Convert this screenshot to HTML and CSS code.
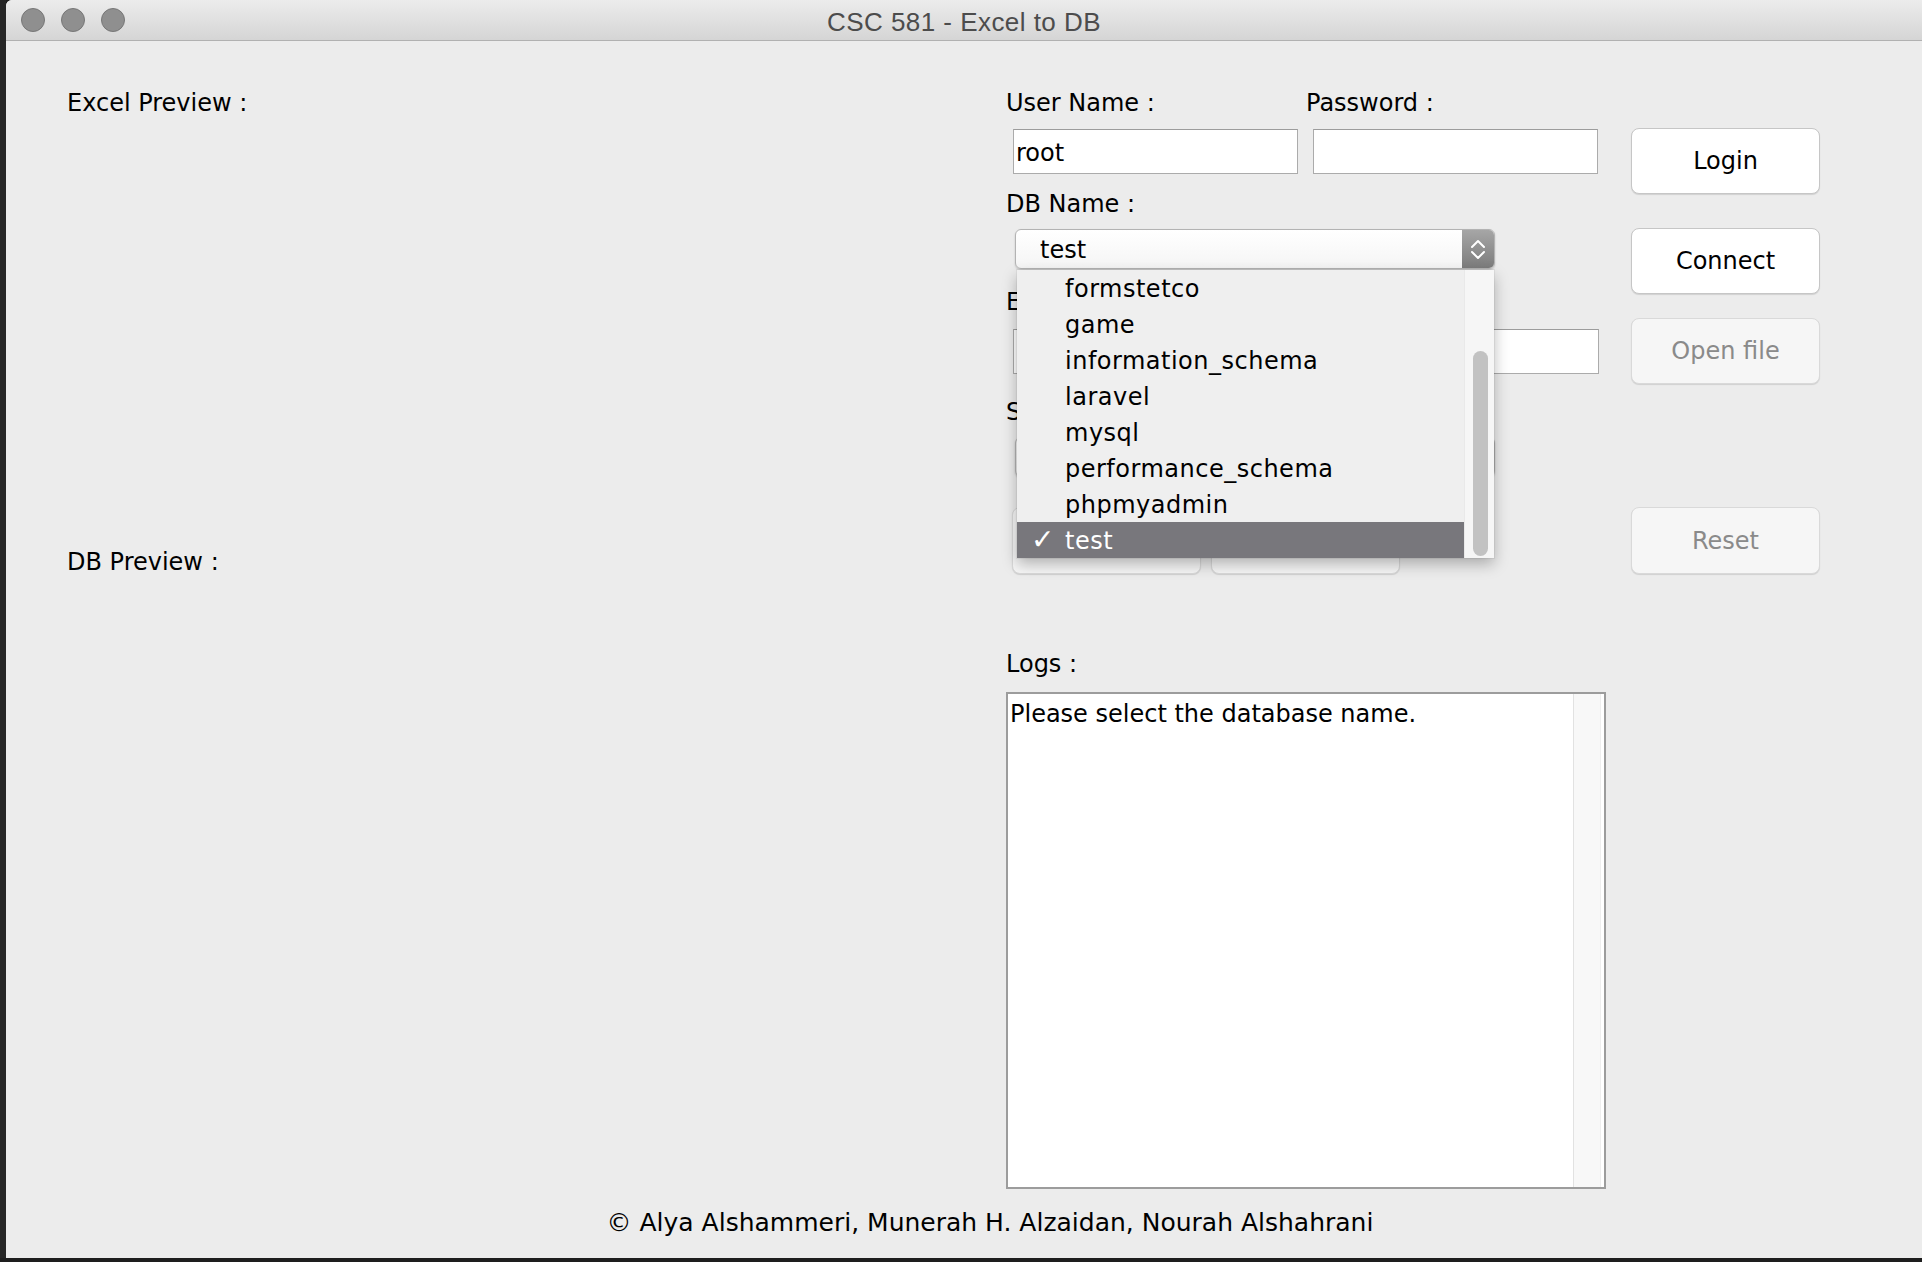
FILE: index.html
```html
<!DOCTYPE html>
<html lang="en">
<head>
<meta charset="utf-8">
<title>CSC 581 - Excel to DB</title>
<link rel="stylesheet" href="styles.css">
</head>
<body>
<div class="desktop">
  <div class="desk-edge"></div>
  <div class="window">
    <header class="titlebar">
      <div class="lights"><span class="light"></span><span class="light"></span><span class="light"></span></div>
      <div class="title">CSC 581 - Excel to DB</div>
      <div></div>
    </header>
    <main class="content">
      <div class="panes">
        <section class="previews">
          <div class="label">Excel Preview :</div>
          <div class="preview-area"></div>
          <div class="label">DB Preview :</div>
        </section>

        <section class="form">
          <div class="pair">
            <div class="label">User Name :</div>
            <div class="label">Password :</div>
          </div>
          <div class="pair pair-fields">
            <div class="cell"><div class="field">root</div></div>
            <div class="cell"><div class="field"></div></div>
          </div>

          <div class="label gap-db">DB Name :</div>
          <div class="combo gap-combo">
            <div class="combo-value">test</div>
            <div class="combo-arrows">
              <svg width="32" height="38" viewBox="0 0 32 38"><path d="M10 17 L16 11 L22 17 M10 22 L16 28 L22 22" fill="none" stroke="#fff" stroke-width="2" stroke-linecap="round" stroke-linejoin="round"/></svg>
            </div>
            <div class="popup">
              <ul class="options">
                <li class="option">formstetco</li>
                <li class="option">game</li>
                <li class="option">information_schema</li>
                <li class="option">laravel</li>
                <li class="option">mysql</li>
                <li class="option">performance_schema</li>
                <li class="option">phpmyadmin</li>
                <li class="option selected"><span class="check">✓</span>test</li>
              </ul>
              <div class="popup-track"><div class="popup-thumb"></div></div>
            </div>
          </div>

          <div class="label gap-file">Excel File :</div>
          <div class="field wide gap-filefield"></div>

          <div class="label gap-sheet">Sheet :</div>
          <div class="combo gap-combo"><div class="combo-value"></div><div class="combo-arrows"></div></div>

          <div class="btn-row">
            <button class="btn btn-tall disabled" aria-hidden="true"></button>
            <button class="btn btn-tall disabled" aria-hidden="true"></button>
          </div>

          <div class="label gap-logs">Logs :</div>
          <div class="log">
            <div class="log-text">Please select the database name.</div>
            <div class="log-track"></div>
          </div>
        </section>

        <section class="actions">
          <button class="btn gap-login">Login</button>
          <button class="btn gap-connect">Connect</button>
          <button class="btn disabled gap-open">Open file</button>
          <button class="btn btn-tall disabled gap-reset">Reset</button>
        </section>
      </div>
      <footer class="credits">© Alya Alshammeri, Munerah H. Alzaidan, Nourah Alshahrani</footer>
    </main>
  </div>
</div>
<div class="desk-bottom"></div>
</body>
</html>
```

FILE: styles.css
```css
* { box-sizing: border-box; }
html, body { margin: 0; padding: 0; }
body {
  width: 1922px;
  height: 1262px;
  overflow: hidden;
  background: #1f1f1f;
  font-family: "DejaVu Sans", sans-serif;
  font-size: 24px;
  color: #000;
}
.desktop { display: flex; height: 1258px; }
.desk-edge { width: 6px; background: #262626; }
.desk-bottom { height: 4px; background: #1e1e1e; }
.window {
  width: 1916px;
  display: flex;
  flex-direction: column;
  background: #ececec;
  border-top-left-radius: 6px;
  overflow: hidden;
}

/* title bar */
.titlebar {
  height: 41px;
  display: grid;
  grid-template-columns: 1fr auto 1fr;
  align-items: center;
  background: linear-gradient(#ececec, #d5d5d5);
  border-bottom: 1px solid #b1b1b1;
}
.lights { display: flex; gap: 16px; padding-left: 15px; }
.light {
  width: 24px; height: 24px; border-radius: 50%;
  background: #8f8f8f; border: 1px solid #777;
}
.title {
  font-family: "Liberation Sans", Arial, sans-serif;
  font-size: 26px;
  letter-spacing: 0.45px;
  color: #4c4c4c;
  padding-top: 4px;
}

/* content */
.content { flex: 1; display: flex; flex-direction: column; padding-top: 50px; }
.panes { display: flex; padding-left: 61px; }
.label { height: 24px; line-height: 24px; white-space: nowrap; }
.previews { width: 939px; display: flex; flex-direction: column; }
.preview-area { height: 435px; }

.form { width: 600px; display: flex; flex-direction: column; }
.pair { display: flex; }
.pair > * { width: 300px; }
.pair-fields { margin-top: 14px; }
.field {
  height: 45px; width: 285px; margin-left: 7px;
  border: 1px solid #ababab; border-top-color: #9c9c9c;
  background: #fff;
  padding: 3px 0 0 2px;
  line-height: 41px;
}
.field.wide { width: 586px; }

.gap-db { margin-top: 18px; }
.gap-combo { margin-top: 13px; }
.gap-file { margin-top: 21px; }
.gap-filefield { margin-top: 15px; }
.gap-sheet { margin-top: 26px; }
.gap-logs { margin-top: 78px; }

.combo {
  position: relative;
  margin-left: 9px;
  width: 480px;
  height: 40px;
  display: flex;
  border: 1px solid #b3b3b3;
  border-radius: 6px;
  background: linear-gradient(#ffffff, #f5f5f5);
  box-shadow: 0 1px 2px rgba(0,0,0,0.18);
}
.combo-value { flex: 1; padding: 2px 0 0 24px; line-height: 36px; }
.combo-arrows {
  width: 32px;
  background: linear-gradient(#a6a6a6, #7c7c7c);
  border-radius: 0 5px 5px 0;
  display: flex; align-items: center; justify-content: center;
}

.popup {
  position: absolute;
  top: 40px; left: 1px;
  width: 477px; height: 288px;
  background: #efefef;
  display: flex;
  box-shadow: 0 6px 14px rgba(0,0,0,0.28), 0 0 0 1px rgba(0,0,0,0.05);
  z-index: 5;
}
.options { flex: 1; list-style: none; margin: 0; padding: 0; }
.option {
  position: relative;
  height: 36px; line-height: 36px;
  padding: 1px 0 0 48px;
  letter-spacing: 0.5px;
  white-space: nowrap;
}
.option.selected { background: #78777c; color: #fff; }
.check { position: absolute; left: 14px; top: 0; font-size: 28px; letter-spacing: 0; }
.popup-track {
  width: 30px;
  background: #f6f6f6;
  border-left: 1px solid #e9e9e9;
  padding: 81px 0 0 8px;
}
.popup-thumb { width: 15px; height: 205px; border-radius: 8px; background: #c2c2c2; }

.btn-row { display: flex; gap: 10px; margin: 30px 0 0 6px; }

.log {
  margin-top: 16px;
  height: 497px;
  border: 2px solid #9c9c9c;
  background: #fff;
  display: flex;
}
.log-text { flex: 1; padding: 8px 0 0 2px; line-height: 24px; white-space: nowrap; }
.log-track {
  width: 28px; margin-right: 3px;
  background: #f8f8f8;
  border-left: 1px solid #e2e2e2;
  border-right: 1px solid #eeeeee;
}

/* buttons */
.actions { width: 189px; margin-left: 25px; display: flex; flex-direction: column; }
.btn {
  font: inherit;
  width: 189px; height: 66px;
  padding: 0;
  border: 1px solid #c6c6c6;
  border-radius: 8px;
  background: #fff;
  color: #000;
  box-shadow: 0 1px 1px rgba(0,0,0,0.12);
}
.btn-tall { height: 67px; }
.btn.disabled { background: #f6f6f6; color: #8a8a8a; border-color: #d9d9d9; }
.gap-login { margin-top: 37px; }
.gap-connect { margin-top: 34px; }
.gap-open { margin-top: 24px; }
.gap-reset { margin-top: 123px; }

.credits {
  margin-top: 20px;
  padding-left: 52px;
  text-align: center;
  font-size: 25px;
  line-height: 28px;
  white-space: nowrap;
}
```
